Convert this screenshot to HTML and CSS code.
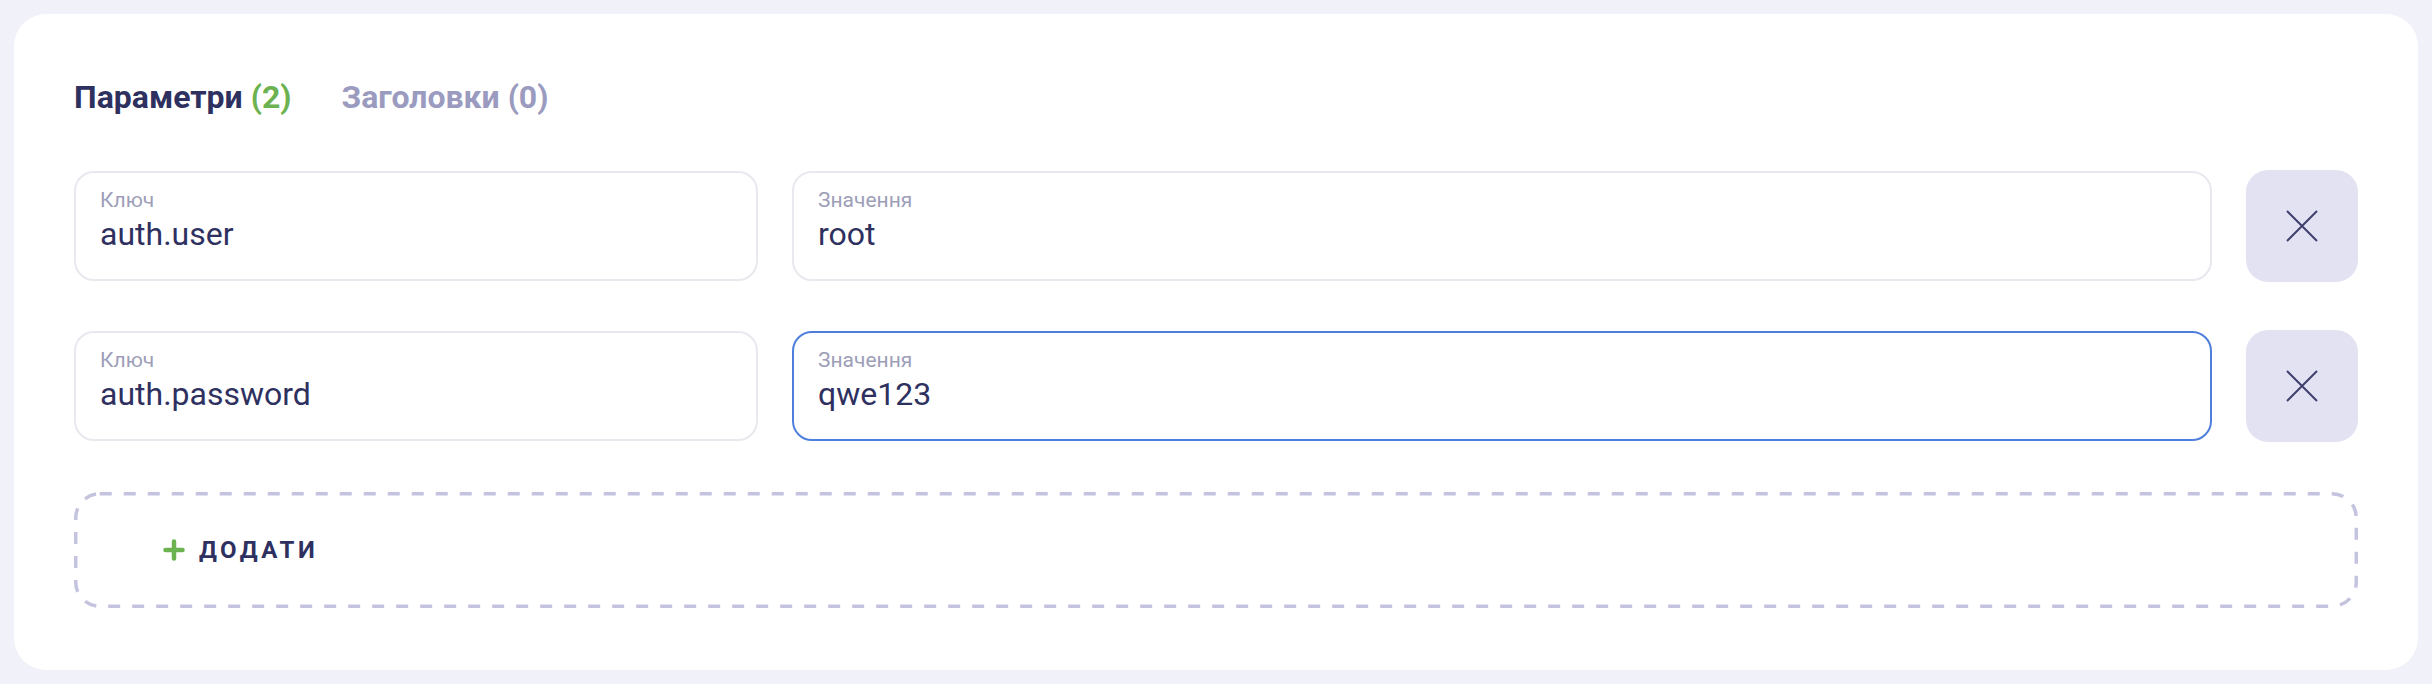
FILE: index.html
```html
<!DOCTYPE html>
<html lang="uk">
<head>
<meta charset="utf-8">
<title>Параметри</title>
<link rel="stylesheet" href="styles.css">
</head>
<body>
<div class="card">
  <div class="tabs">
    <div class="tab tab-active">Параметри <span class="count-green">(2)</span></div>
    <div class="tab">Заголовки (0)</div>
  </div>
  <div class="rows">
    <div class="row">
      <div class="field">
        <div class="field-label">Ключ</div>
        <div class="field-value">auth.user</div>
      </div>
      <div class="field">
        <div class="field-label">Значення</div>
        <div class="field-value">root</div>
      </div>
      <button class="delete" type="button" aria-label="Видалити">
        <svg width="32" height="32" viewBox="0 0 32 32"><path d="M1 1 L31 31 M31 1 L1 31" stroke="#3e3f6d" stroke-width="2" fill="none"/></svg>
      </button>
    </div>
    <div class="row">
      <div class="field">
        <div class="field-label">Ключ</div>
        <div class="field-value">auth.password</div>
      </div>
      <div class="field field-focused">
        <div class="field-label">Значення</div>
        <div class="field-value">qwe123</div>
      </div>
      <button class="delete" type="button" aria-label="Видалити">
        <svg width="32" height="32" viewBox="0 0 32 32"><path d="M1 1 L31 31 M31 1 L1 31" stroke="#3e3f6d" stroke-width="2" fill="none"/></svg>
      </button>
    </div>
    <button class="add" type="button">
      <svg class="plus" width="22" height="22" viewBox="0 0 22 22"><path d="M11 2.5 V19.5 M2.5 11 H19.5" stroke="#6cb250" stroke-width="4.5" stroke-linecap="round" fill="none"/></svg>
      <span class="add-text">ДОДАТИ</span>
    </button>
  </div>
</div>
</body>
</html>
```

FILE: styles.css
```css
* { box-sizing: border-box; }

html, body {
  margin: 0;
  padding: 0;
  background: #f0f1f9;
  font-family: Roboto, "Noto Sans", sans-serif;
}

body {
  padding: 14px;
}

.card {
  background: #ffffff;
  border-radius: 32px;
  height: 656px;
  padding: 64px 60px 62px 60px;
}

.tabs {
  display: flex;
  gap: 50px;
  height: 38px;
  margin-bottom: 54px;
}

.tab {
  font-size: 32px;
  line-height: 38px;
  font-weight: 700;
  color: #9a9bbf;
}

.tab-active {
  color: #2e3160;
}

.count-green {
  color: #6cb250;
}

.rows {
  display: flex;
  flex-direction: column;
  gap: 48px;
}

.row {
  display: grid;
  grid-template-columns: 684px 1fr 112px;
  column-gap: 34px;
  align-items: center;
  height: 112px;
}

.field {
  height: 110px;
  border: 2px solid #e8e8ef;
  border-radius: 20px;
  padding: 15px 24px 0 24px;
  background: #fff;
}

.field-focused {
  border-color: #4f7fdc;
}

.field-label {
  font-size: 21px;
  line-height: 24px;
  color: #9d9eb8;
}

.field-value {
  margin-top: 3px;
  font-size: 32px;
  line-height: 38px;
  color: #2e3160;
}

.delete {
  width: 112px;
  height: 112px;
  border: none;
  border-radius: 22px;
  background: #e3e2f2;
  display: flex;
  align-items: center;
  justify-content: center;
  padding: 0;
}

.add {
  margin-top: 2px;
  height: 116px;
  width: 100%;
  border: none;
  background-color: transparent;
  background-image: url("data:image/svg+xml,%3Csvg xmlns='http://www.w3.org/2000/svg' width='2284' height='116'%3E%3Crect x='1.75' y='1.75' width='2280.5' height='112.5' rx='24' fill='none' stroke='%23c5c4df' stroke-width='3.5' stroke-dasharray='12 12'/%3E%3C/svg%3E");
  background-repeat: no-repeat;
  display: flex;
  align-items: center;
  padding: 0 0 0 89px;
  gap: 14px;
  font-family: Roboto, "Noto Sans", sans-serif;
}

.plus {
  display: block;
}

.add-text {
  font-size: 24px;
  line-height: 28px;
  font-weight: 700;
  letter-spacing: 3.5px;
  color: #2e3160;
}
```
